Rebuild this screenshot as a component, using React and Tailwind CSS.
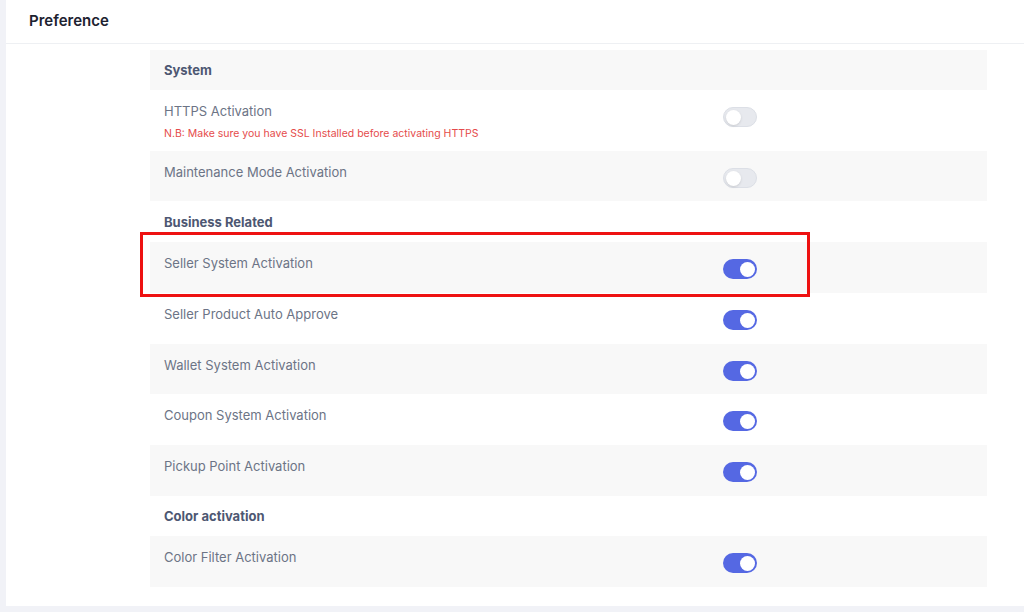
import React from 'react';

const Toggle = ({ on }) => (
    <div
        className={`mt-[17px] w-[34px] h-[20px] rounded-full flex items-center px-[2px] ${
            on ? 'bg-[#5568e3] justify-end' : 'bg-[#e7e9ee] border border-[#dcdfe6] justify-start'
        }`}
    >
        <div className={`rounded-full bg-white ${on ? 'w-[15px] h-[15px]' : 'w-[15px] h-[15px] shadow-sm'}`} />
    </div>
);

const SectionRow = ({ title, gray, height }) => (
    <div className={`flex items-center px-[14px] pt-[2px] ${height} ${gray ? 'bg-[#f8f8f8]' : 'bg-white'}`}>
        <span className="text-[13px] font-bold text-[#4d5772]">{title}</span>
    </div>
);

const OptionRow = ({ label, note, on, gray, height }) => (
    <div className={`flex items-start px-[14px] ${height} ${gray ? 'bg-[#f8f8f8]' : 'bg-white'}`}>
        <div className="w-[559px] pt-[13px]">
            <div className="text-[13px] leading-[16px] text-[#6c7486]">{label}</div>
            {note && <div className="mt-[9px] text-[10.5px] leading-[12px] text-[#e54b4b]">{note}</div>}
        </div>
        <Toggle on={on} />
    </div>
);

export default function App() {
    return (
        <div className="w-[1024px] h-[612px] bg-[#f1f2f7] pl-[6px] overflow-hidden font-['Inter',sans-serif]">
            <div className="relative bg-white h-[606px] w-[1018px]">
                <div className="h-[44px] border-b border-[#eef0f3] flex items-center pl-[23px]">
                    <h1 className="text-[15px] font-semibold text-[#1d2230]">Preference</h1>
                </div>

                <div className="ml-[144px] mt-[6px] w-[837px] flex flex-col">
                    <SectionRow title="System" gray height="h-[40px]" />
                    <OptionRow
                        label="HTTPS Activation"
                        note="N.B: Make sure you have SSL Installed before activating HTTPS"
                        height="h-[61px]"
                    />
                    <OptionRow label="Maintenance Mode Activation" gray height="h-[50px]" />
                    <SectionRow title="Business Related" height="h-[41px]" />
                    <OptionRow label="Seller System Activation" on gray height="h-[51px]" />
                    <OptionRow label="Seller Product Auto Approve" on height="h-[51px]" />
                    <OptionRow label="Wallet System Activation" on gray height="h-[50px]" />
                    <OptionRow label="Coupon System Activation" on height="h-[51px]" />
                    <OptionRow label="Pickup Point Activation" on gray height="h-[51px]" />
                    <SectionRow title="Color activation" height="h-[40px]" />
                    <OptionRow label="Color Filter Activation" on gray height="h-[51px]" />
                </div>

                {/* highlight annotation */}
                <div className="absolute left-[134px] top-[232px] w-[670px] h-[65px] border-[3px] border-[#ee1111] pointer-events-none" />
            </div>
        </div>
    );
}
